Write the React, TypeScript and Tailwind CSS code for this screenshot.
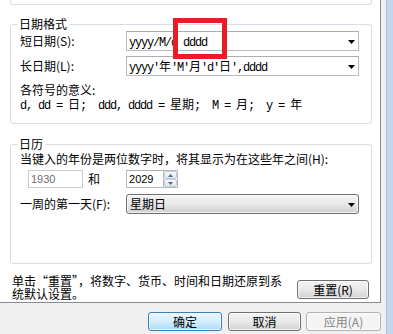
import React from "react";

const CJK = "font-['Noto_Sans_CJK_SC','Liberation_Sans',sans-serif]";

function Mono({ text }: { text: string }) {
  const parts = text.split(/([\u3000-\u9fff]+)/).filter((p) => p.length > 0);
  return (
    <span className="whitespace-pre">
      {parts.map((p, i) =>
        /[\u3000-\u9fff]/.test(p) ? (
          <span key={i} className={`${CJK} tracking-normal text-[12px]`}>
            {p}
          </span>
        ) : (
          <span key={i} className="font-['Liberation_Mono',monospace] text-[12px] tracking-[-1.2px]">
            {p}
          </span>
        )
      )}
    </span>
  );
}

function Arrow() {
  return (
    <svg width="7" height="4" viewBox="0 0 7 4">
      <path d="M0 0 H7 L3.5 4 Z" fill="#000" />
    </svg>
  );
}

function Combo({ text }: { text: string }) {
  return (
    <div className="flex h-[20px] w-[233px] items-center border border-[#b5bcc6] border-t-[#abadb3] bg-white pl-[2px]">
      <div className="flex-1 leading-[14px]">
        <Mono text={text} />
      </div>
      <div className="flex w-[14px] items-center justify-center pt-[1px]">
        <Arrow />
      </div>
    </div>
  );
}

function Btn({
  children,
  w,
  kind = "normal",
  h = "h-[19px]",
}: {
  children: React.ReactNode;
  w: string;
  kind?: "normal" | "default" | "disabled";
  h?: string;
}) {
  const cls =
    kind === "default"
      ? "border-[#3c7fb1] bg-gradient-to-b from-[#eaf6fd] via-[#d5eefc] to-[#a9daf5] text-black"
      : kind === "disabled"
      ? "border-[#adb2b5] bg-[#f4f4f4] text-[#838383]"
      : "border-[#707070] bg-gradient-to-b from-[#f4f4f4] via-[#e8e8e8] to-[#d2d2d2] text-black";
  return (
    <div
      className={`${w} ${h} ${cls} flex items-center justify-center rounded-[3px] border text-[12px] leading-[14px] shadow-[inset_0_0_0_1px_rgba(255,255,255,0.7)]`}
    >
      {children}
    </div>
  );
}

export default function App() {
  return (
    <div className={`relative flex h-[334px] w-[393px] overflow-hidden bg-[#f0f0f0] text-black ${CJK}`}>
      <div className="flex w-[386px] flex-col">
        {/* tab page */}
        <div className="h-[303px] w-[381px] border-b border-r border-[#898c95] bg-white">
          {/* previous group remnant */}
          <div className="ml-[10px] h-[5px] w-[362px] rounded-b-[3px] border-x border-b border-[#d5dfe5]" />

          {/* 日期格式 */}
          <fieldset className="ml-[10px] mt-[12px] w-[362px] rounded-[3px] border border-[#d5dfe5] p-0">
            <legend className="ml-[6px] px-[2px] text-[12px] leading-[14px]">日期格式</legend>
            <div className="pb-[10px] pl-[9px]">
              <div className="flex h-[20px] items-center">
                <div className="w-[106px] text-[12px] leading-[14px]">短日期(S):</div>
                <Combo text="yyyy/M/d dddd" />
              </div>
              <div className="mt-[5px] flex h-[20px] items-center">
                <div className="w-[106px] text-[12px] leading-[14px]">长日期(L):</div>
                <Combo text="yyyy'年'M'月'd'日',dddd" />
              </div>
              <div className="mt-[7px] text-[12px] leading-[13px]">各符号的意义:</div>
              <div className="leading-[13px]">
                <Mono text="d, dd = 日;  ddd, dddd = 星期;  M = 月;  y = 年" />
              </div>
            </div>
          </fieldset>

          {/* 日历 */}
          <fieldset className="ml-[10px] mt-[13px] w-[362px] rounded-[3px] border border-[#d5dfe5] p-0">
            <legend className="ml-[6px] px-[2px] text-[12px] leading-[14px]">日历</legend>
            <div className="pb-[49px] pl-[9px]">
              <div className="mt-[1px] whitespace-nowrap text-[12px] leading-[13px]">
                当键入的年份是两位数字时，将其显示为在这些年之间(H):
              </div>
              <div className="mt-[5px] flex h-[18px] items-center">
                <div className="ml-[8px] flex h-[18px] w-[55px] items-center border border-[#c9cdd2] bg-white pl-[2px] font-['Liberation_Sans',sans-serif] text-[11px] leading-[13px] text-[#6d6d6d]">
                  1930
                </div>
                <div className="ml-[5px] text-[12px] leading-[14px]">和</div>
                <div className="ml-[26px] flex h-[18px] items-center">
                  <div className="flex h-[18px] w-[38px] items-center border border-[#b5bcc6] border-t-[#abadb3] bg-white pl-[2px] font-['Liberation_Sans',sans-serif] text-[11px] leading-[13px]">
                    2029
                  </div>
                  <div className="flex h-[18px] w-[14px] flex-col border border-l-0 border-[#b5bcc6]">
                    <div className="flex flex-1 items-center justify-center rounded-[2px] border border-[#c3ccd8] bg-gradient-to-b from-[#f6f8fb] to-[#dfe6ef]">
                      <svg width="5" height="3" viewBox="0 0 5 3">
                        <path d="M0 3 L2.5 0 L5 3 Z" fill="#4e6a8e" />
                      </svg>
                    </div>
                    <div className="flex flex-1 items-center justify-center rounded-[2px] border border-[#c3ccd8] bg-gradient-to-b from-[#f6f8fb] to-[#dfe6ef]">
                      <svg width="5" height="3" viewBox="0 0 5 3">
                        <path d="M0 0 L5 0 L2.5 3 Z" fill="#4e6a8e" />
                      </svg>
                    </div>
                  </div>
                </div>
              </div>
              <div className="mt-[6px] flex h-[20px] items-center">
                <div className="w-[106px] text-[12px] leading-[14px]">一周的第一天(F):</div>
                <div className="flex h-[20px] w-[233px] items-center rounded-[3px] border border-[#707070] bg-gradient-to-b from-[#f4f4f4] via-[#e8e8e8] to-[#d0d0d0] pl-[3px] shadow-[inset_0_0_0_1px_rgba(255,255,255,0.7)]">
                  <div className="flex-1 text-[12px] leading-[14px]">星期日</div>
                  <div className="flex w-[14px] items-center justify-center pt-[1px]">
                    <Arrow />
                  </div>
                </div>
              </div>
            </div>
          </fieldset>

          {/* reset row */}
          <div className="mt-[10px] flex items-start pl-[12px]">
            <div className="text-[12px] leading-[13px]">
              单击“重置”，将数字、货币、时间和日期还原到系
              <br />
              统默认设置。
            </div>
            <div className="ml-auto mr-[11px] mt-[6px]">
              <Btn w="w-[72px]">重置(R)</Btn>
            </div>
          </div>
        </div>

        {/* bottom buttons */}
        <div className="flex pl-[148px] pt-[9px]">
          <Btn w="w-[74px]" kind="default">
            确定
          </Btn>
          <div className="ml-[6px]">
            <Btn w="w-[73px]">取消</Btn>
          </div>
          <div className="ml-[5px]">
            <Btn w="w-[75px]" kind="disabled">
              应用(A)
            </Btn>
          </div>
        </div>
      </div>

      {/* window frame */}
      <div className="h-full w-[7px] border-l border-[#a9c1dc] bg-[#c2d7ee]" />

      {/* red annotation box */}
      <div className="absolute left-[173px] top-[18px] h-[41px] w-[54px] border-[5px] border-[#e51f28]" />
    </div>
  );
}
